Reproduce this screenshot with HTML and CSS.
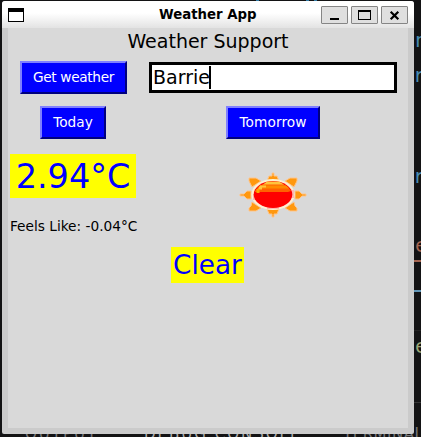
FILE: index.html
```
<!DOCTYPE html>
<html lang="en">
<head>
<meta charset="utf-8">
<title>Weather App</title>
<link rel="stylesheet" href="styles.css">
</head>
<body>
<div class="desktop">
  <span class="code c1">n</span>
  <span class="code c2">r</span>
  <span class="code c3">r</span>
  <span class="code c4">e</span>
  <span class="code c5">e</span>
  <i class="rule r1"></i><i class="rule r2"></i><i class="rule r3"></i><i class="rule r4"></i>
  <i class="tick t1"></i><i class="tick t2"></i><i class="tick t3"></i>
  <span class="tab p1">OUTPUT</span>
  <span class="tab p2">DEBUG CONSOLE</span>
  <span class="tab p3">TERMINAL</span>
  <main class="window">
    <header class="titlebar">
      <svg class="appicon" width="16" height="14" shape-rendering="crispEdges"><path fill="#000" d="M0 0h16v14H0z"/><path fill="#fff" d="M1 4h14v9H1z"/></svg>
      <h1 class="title">Weather App</h1>
      <div class="controls">
        <span class="control"><svg width="25" height="16" shape-rendering="crispEdges"><path d="M8 11h9v2H8z"/></svg></span>
        <span class="control"><svg width="25" height="16" shape-rendering="crispEdges"><path fill-rule="evenodd" d="M6 3h13v10H6zM7 5v7h11V5z"/></svg></span>
        <span class="control"><svg width="25" height="16"><path d="M8.700 4.700l7.600 7.600M16.300 4.700l-7.600 7.600" stroke="#000" stroke-width="2.200"/></svg></span>
      </div>
    </header>
    <section class="client">
      <h2 class="heading">Weather Support</h2>
      <div class="search"><button class="btn get">Get weather</button><div class="entry">Barrie<i class="caret"></i></div></div>
      <div class="days"><button class="btn today">Today</button><button class="btn tomorrow">Tomorrow</button></div>
      <div class="reading">
        <div class="temp">2.94°C</div>
        <svg class="sun" width="68" height="46" viewBox="0 0 68 46">
          <g fill="#ff980f" stroke="#ffc58a" stroke-width="1">
            <path d="M33 1h2v3h3l2 5H28l2-5h3zM33 45h2v-3h3l2-5H28l2 5h3z"/>
            <path d="M1 22h4l3-3h4v8H8l-3-3H1zM67 22h-4l-3-3h-4v8h4l3-3h4z"/>
            <path d="M10 6h7l5 3-9 6-3-6zM58 6h-7l-5 3 9 6 3-6zM10 39h7l5-3-9-6-1 4-2 2zM58 39h-7l-5-3 9-6 1 4 2 2z"/>
          </g>
          <ellipse cx="34" cy="22.500" rx="21.500" ry="15.500" fill="#fff0d0"/>
          <path fill="#ffb8b0" d="M14 22h4v6h-4zM52 18h3v8h-3zM28 35h12v2H28z"/>
          <ellipse cx="34" cy="22.500" rx="19.300" ry="13.500" fill="#f00"/>
          <path fill="#ff6200" d="M16 19l3-4 5-3h20l5 3 3 4-3 1H16z"/>
          <path fill="#ff8a00" d="M21 13.500h26l3 3H19z"/>
          <path fill="#ffc43c" d="M24 12.500l4-3h12l5 3zM21 13.500h6v2h-4v2h-4z"/>
          <path fill="#ffa300" d="M17.500 17h3v4h-3z"/>
        </svg>
      </div>
      <p class="feels">Feels Like: -0.04°C</p>
      <div class="condition">Clear</div>
    </section>
  </main>
</div>
</body>
</html>
```
FILE: styles.css
```
* { box-sizing: border-box; }
body { margin: 0; font-family: "DejaVu Sans", sans-serif; }
.desktop { position: relative; width: 421px; height: 437px; overflow: hidden; background: #131314; }
.window {
  position: absolute; left: 2px; top: 1px; width: 412px; height: 433px;
  border-radius: 3px 3px 2px 2px; overflow: hidden; background: #cbcbcb;
}
.titlebar {
  height: 27px; padding: 5px 6px 0; display: flex;
  background: linear-gradient(#fff 45%, #e3e3e3);
}
.appicon { margin-top: 2px; }
.title { flex: 1; margin: 0 0 0 135px; font-size: 13.3px; line-height: 17px; font-weight: bold; color: #000; white-space: nowrap; }
.controls { display: flex; gap: 3px; }
.control { width: 27px; height: 18px; border: 1px solid #858585; border-radius: 1px; background: #dfdfdf; }
.control svg { display: block; }
.client { height: 400px; margin: 0 6px; background: #d9d9d9; color: #000; }
.heading { margin: 0; padding-top: 1px; height: 33px; text-align: center; font-size: 19px; line-height: 25px; font-weight: normal; }
.search { display: flex; align-items: center; height: 33px; padding-left: 12px; gap: 22px; }
.btn {
  display: block; height: 33px; padding: 0 0 1px; border: 2px solid; border-color: #7f7fff #00007f #00007f #7f7fff;
  background: #00f; color: #fff; font: 13.7px/28px "DejaVu Sans", sans-serif; text-align: center;
}
.get { width: 107px; letter-spacing: -.35px; }
.entry { display: flex; width: 248px; height: 31px; border: 3px solid #000; padding-left: 1px; background: #fff; font-size: 19px; line-height: 25px; }
.caret { width: 2px; height: 23px; margin: 1px 0 0 -1px; background: #000; }
.days { display: flex; gap: 120px; padding: 12px 0 0 32px; }
.today { width: 66px; }
.tomorrow { width: 94px; letter-spacing: .1px; }
.reading { display: flex; height: 75px; padding: 15px 0 0 2px; gap: 103px; }
.temp { width: 126px; height: 44px; background: #ff0; color: #00f; font-size: 33.5px; line-height: 45px; text-align: center; }
.sun { margin-top: 18px; }
.feels { margin: 0; padding: 3px 0 0 2px; height: 33px; font-size: 13.7px; line-height: 19px; }
.condition { width: 73px; height: 36px; margin-left: 163px; background: #ff0; color: #00f; font-size: 26.3px; line-height: 36px; text-align: center; }
.code { position: absolute; left: 415px; font: 20px/24px "DejaVu Sans Mono", monospace; color: #488bb0; }
.c1 { left: 415px; top: 28px; }
.c2 { left: 413px; top: 63px; }
.c3 { left: 413px; top: 164px; }
.c4 { top: 233px; color: #a36450; }
.c5 { top: 334px; color: #9aa574; }
.rule { position: absolute; left: 414px; width: 7px; height: 2px; background: #a36450; }
.r1 { top: 260px; }
.r2 { top: 290px; background: #6195b5; }
.r3 { top: 402px; height: 1px; background: #343434; }
.r4 { top: 330px; height: 1px; background: #222; }
.tick { position: absolute; top: 0; width: 3px; height: 1px; background: #327ba5; }
.t1 { left: 256px; }
.t2 { left: 306px; }
.t3 { left: 314px; }
.tab { position: absolute; top: 425px; font: 15px/18px "DejaVu Sans", sans-serif; color: #77777a; white-space: nowrap; }
.p1 { left: 25px; letter-spacing: 2px; }
.p2 { left: 144px; color: #aaa; letter-spacing: 2px; }
.p3 { left: 343px; letter-spacing: .5px; }
```
